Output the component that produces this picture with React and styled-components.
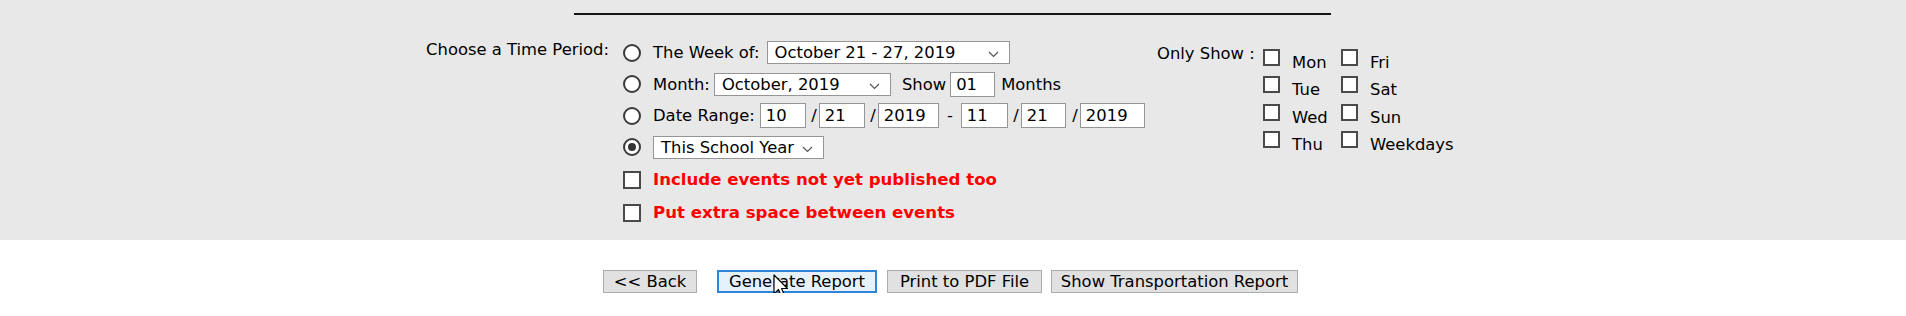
import React from "react";
import styled, { createGlobalStyle } from "styled-components";

const GlobalStyle = createGlobalStyle`
  body {
    margin: 0;
    background: #ffffff;
    font-family: "DejaVu Sans", Verdana, sans-serif;
    font-size: 16.4px;
    color: #000;
  }
`;

const Panel = styled.div`
  background: #e8e8e8;
  padding: 13px 0 11px;
`;

const Rule = styled.div`
  width: 757px;
  height: 2px;
  background: #141414;
  margin: 0 auto 22px;
  position: relative;
  left: -1px;
`;

const Form = styled.div`
  width: 1056px;
  margin: 0 auto;
  display: flex;
  align-items: flex-start;
`;

const PeriodLabel = styled.div`
  width: 198px;
  box-sizing: border-box;
  padding: 3px 14px 0 0;
  text-align: right;
  line-height: 20px;
  white-space: nowrap;
`;

const Options = styled.div`
  width: 534px;
  display: flex;
  flex-direction: column;
`;

const Row = styled.div`
  display: flex;
  align-items: center;
  height: ${(p) => p.$h || 31.5}px;
  white-space: nowrap;
`;

const Radio = styled.span`
  width: 18px;
  height: 18px;
  box-sizing: border-box;
  border: 2px solid #3a3a3a;
  border-radius: 50%;
  background: #fff;
  display: flex;
  align-items: center;
  justify-content: center;
  flex: none;

  &::after {
    content: "";
    width: 8px;
    height: 8px;
    border-radius: 50%;
    background: #333;
    display: ${(p) => (p.$checked ? "block" : "none")};
  }
`;

const Box = styled.span`
  width: ${(p) => p.$size || 18}px;
  height: ${(p) => p.$size || 18}px;
  box-sizing: border-box;
  border: 2px solid #4a4a4a;
  background: #fff;
  flex: none;
`;

const Text = styled.span`
  margin-left: ${(p) => p.$ml || 0}px;
  margin-right: ${(p) => p.$mr || 0}px;
`;

const RedText = styled.span`
  margin-left: 12px;
  color: #ff0000;
  font-weight: bold;
  font-size: 16.6px;
`;

const SelectBox = styled.span`
  width: ${(p) => p.$w}px;
  height: 23px;
  box-sizing: border-box;
  border: 1px solid #959595;
  background: #fff;
  display: flex;
  align-items: center;
  justify-content: space-between;
  padding: 0 10px 0 7px;
  margin-left: ${(p) => p.$ml || 0}px;
  flex: none;

  svg {
    margin-top: 4px;
  }
`;

const TextBox = styled.span`
  width: ${(p) => p.$w}px;
  height: 25px;
  box-sizing: border-box;
  border: 1px solid #959595;
  background: #fff;
  display: flex;
  align-items: center;
  padding-left: 5px;
  margin-left: ${(p) => p.$ml || 0}px;
  flex: none;
`;

const Sep = styled.span`
  width: ${(p) => p.$w}px;
  text-align: ${(p) => p.$align || "right"};
  padding-right: ${(p) => (p.$align === "center" ? 0 : 2)}px;
  box-sizing: border-box;
  flex: none;
`;

const OnlyShow = styled.div`
  display: flex;
  align-items: flex-start;
`;

const OnlyLabel = styled.div`
  width: 106px;
  padding-top: 7px;
  line-height: 20px;
  white-space: nowrap;
`;

const DaysGrid = styled.div`
  display: grid;
  grid-template-columns: 78px auto;
  grid-auto-rows: 27.33px;
  margin-top: 12px;
`;

const DayItem = styled.label`
  display: flex;
  align-items: flex-start;
  white-space: nowrap;

  span + span {
    margin-left: 12px;
    margin-top: 4px;
    line-height: 20px;
  }
`;

const ButtonBar = styled.div`
  display: flex;
  justify-content: center;
  padding: 30px 5px 0 0;
`;

const Button = styled.button`
  position: relative;
  width: ${(p) => p.$w}px;
  height: 23px;
  margin-right: ${(p) => p.$mr || 0}px;
  padding: 0;
  font-family: "DejaVu Sans", Verdana, sans-serif;
  font-size: 16.4px;
  color: #000;
  background: ${(p) => (p.$primary ? "#e5f1fb" : "#e1e1e1")};
  border: ${(p) => (p.$primary ? "2px solid #2f86d8" : "1px solid #acacac")};
  box-sizing: border-box;
  white-space: nowrap;
`;

const Cursor = styled.svg`
  position: absolute;
  left: 54px;
  top: 2px;
`;

const Chevron = () => (
  <svg width="11" height="7" viewBox="0 0 11 7">
    <polyline points="1,1 5.5,5.5 10,1" fill="none" stroke="#555" strokeWidth="1.2" />
  </svg>
);

const Select = ({ w, ml, children }) => (
  <SelectBox $w={w} $ml={ml}>
    <span>{children}</span>
    <Chevron />
  </SelectBox>
);

const days = [
  ["Mon", "Fri"],
  ["Tue", "Sat"],
  ["Wed", "Sun"],
  ["Thu", "Weekdays"],
];

export default function App() {
  return (
    <>
      <GlobalStyle />
      <Panel>
        <Rule />
        <Form>
          <PeriodLabel>Choose a Time Period:</PeriodLabel>
          <Options>
            <Row>
              <Radio />
              <Text $ml={12}>The Week of:</Text>
              <Select w={243} ml={7}>October 21 - 27, 2019</Select>
            </Row>
            <Row>
              <Radio />
              <Text $ml={12}>Month:</Text>
              <Select w={177} ml={4}>October, 2019</Select>
              <Text $ml={11}>Show</Text>
              <TextBox $w={45} $ml={4}>01</TextBox>
              <Text $ml={6}>Months</Text>
            </Row>
            <Row>
              <Radio />
              <Text $ml={12}>Date Range:</Text>
              <TextBox $w={46} $ml={5}>10</TextBox>
              <Sep $w={13}>/</Sep>
              <TextBox $w={46}>21</TextBox>
              <Sep $w={13}>/</Sep>
              <TextBox $w={61}>2019</TextBox>
              <Sep $w={22} $align="center">-</Sep>
              <TextBox $w={47}>11</TextBox>
              <Sep $w={13}>/</Sep>
              <TextBox $w={45}>21</TextBox>
              <Sep $w={14}>/</Sep>
              <TextBox $w={65}>2019</TextBox>
            </Row>
            <Row>
              <Radio $checked />
              <Select w={171} ml={12}>This School Year</Select>
            </Row>
            <Row $h={33}>
              <Box />
              <RedText>Include events not yet published too</RedText>
            </Row>
            <Row $h={33}>
              <Box />
              <RedText>Put extra space between events</RedText>
            </Row>
          </Options>
          <OnlyShow>
            <OnlyLabel>Only Show :</OnlyLabel>
            <DaysGrid>
              {days.flat().map((d) => (
                <DayItem key={d}>
                  <Box $size={17} />
                  <span>{d}</span>
                </DayItem>
              ))}
            </DaysGrid>
          </OnlyShow>
        </Form>
      </Panel>
      <ButtonBar>
        <Button $w={94} $mr={20}>&lt;&lt; Back</Button>
        <Button $w={160} $mr={10} $primary>
          Generate Report
          <Cursor width="16" height="26" viewBox="0 0 16 26">
            <path
              d="M1 1 L1 20 L5.5 15.5 L9 24 L12 22.8 L8.6 14.5 L14.5 14.5 Z"
              fill="#fff"
              stroke="#000"
              strokeWidth="1.2"
              strokeLinejoin="round"
            />
          </Cursor>
        </Button>
        <Button $w={155} $mr={9}>Print to PDF File</Button>
        <Button $w={247}>Show Transportation Report</Button>
      </ButtonBar>
    </>
  );
}
